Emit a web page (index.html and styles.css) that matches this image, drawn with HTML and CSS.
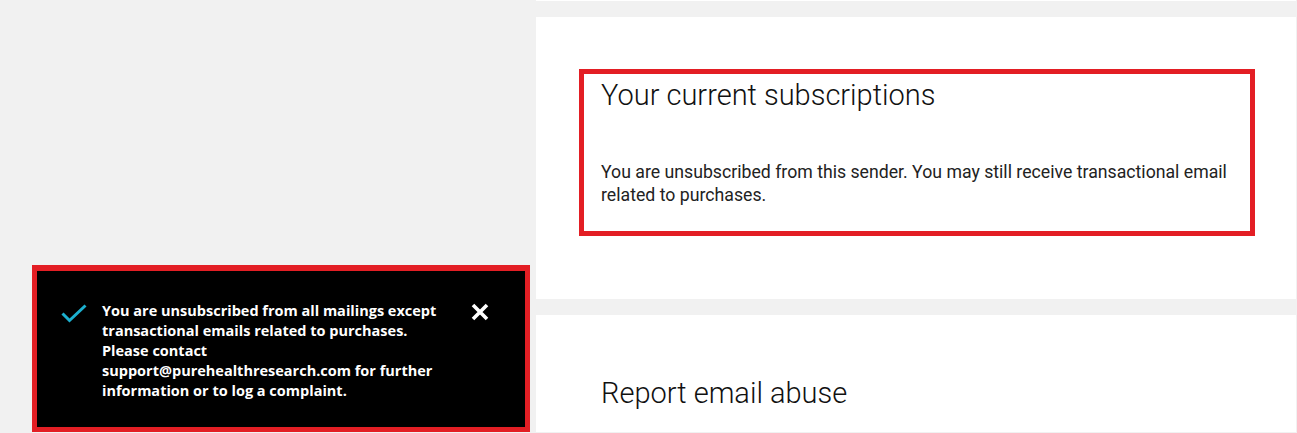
FILE: index.html
```html
<!DOCTYPE html>
<html lang="en">
<head>
<meta charset="utf-8">
<title>Subscriptions</title>
<link rel="stylesheet" href="styles.css">
</head>
<body>
<div class="page">
  <aside class="side"></aside>
  <main class="main">
    <div class="card card-stub"></div>
    <section class="card card-subs">
      <div class="highlight">
        <h2 class="title">Your current subscriptions</h2>
        <p class="status">You are unsubscribed from this sender. You may still receive transactional email related to purchases.</p>
      </div>
    </section>
    <section class="card card-report">
      <h2 class="title">Report email abuse</h2>
    </section>
  </main>
</div>
<div class="toast" role="status">
  <div class="toast-body">
    <svg class="toast-check" width="26" height="19" viewBox="0 0 26 19" aria-hidden="true">
      <path d="M1.5 9.5 L8.5 16.5 L24.5 1.5" fill="none" stroke="#1cb0cf" stroke-width="3"/>
    </svg>
    <p class="toast-text">You are unsubscribed from all mailings except transactional emails related to purchases. Please contact support@purehealthresearch.com for further information or to log a complaint.</p>
    <svg class="toast-close" width="18" height="18" viewBox="0 0 18 18" aria-hidden="true">
      <path d="M2 2 L16 16 M16 2 L2 16" fill="none" stroke="#ffffff" stroke-width="3.6"/>
    </svg>
  </div>
</div>
</body>
</html>
```
FILE: styles.css
```css
html, body {
  margin: 0;
  padding: 0;
}
body {
  background: #f1f1f1;
  font-family: Roboto, "Liberation Sans", sans-serif;
  height: 433px;
  overflow: hidden;
}
.page {
  display: grid;
  grid-template-columns: 536px 1fr;
  padding-right: 1px;
}
.main {
  display: flex;
  flex-direction: column;
  gap: 16px;
}
.card {
  background: #ffffff;
}
.card-stub {
  height: 1px;
}
.card-subs {
  height: 282px;
  box-sizing: border-box;
  padding: 52px 41px 0 43px;
}
.highlight {
  border: 5px solid #e31e24;
  padding: 4px 17px 24px 17px;
}
.title {
  margin: 0;
  font-family: Roboto, "Liberation Sans", sans-serif;
  font-weight: 300;
  font-size: 29px;
  line-height: 1.2;
  color: #111111;
}
.status {
  margin: 48px 0 0;
  font-size: 17.7px;
  line-height: 23px;
  font-weight: 400;
  color: #222222;
}
.card-report {
  height: 117px;
  box-sizing: border-box;
  padding: 61px 0 0 65px;
}
.toast {
  position: fixed;
  left: 32px;
  bottom: 1px;
  width: 488px;
  border: 5px solid #e31e24;
  border-top-width: 6px;
  background: #000000;
}
.toast-body {
  display: flex;
  align-items: flex-start;
  padding: 30px 36px 26px 24px;
  height: 100px;
}
.toast-check {
  flex: none;
  margin-top: 3px;
}
.toast-text {
  flex: 1;
  margin: 0 22px 0 15px;
  font-family: "Open Sans", "Liberation Sans", sans-serif;
  font-weight: 700;
  font-size: 14.5px;
  line-height: 20px;
  color: #ffffff;
}
.toast-close {
  flex: none;
  margin-top: 2px;
}
```
